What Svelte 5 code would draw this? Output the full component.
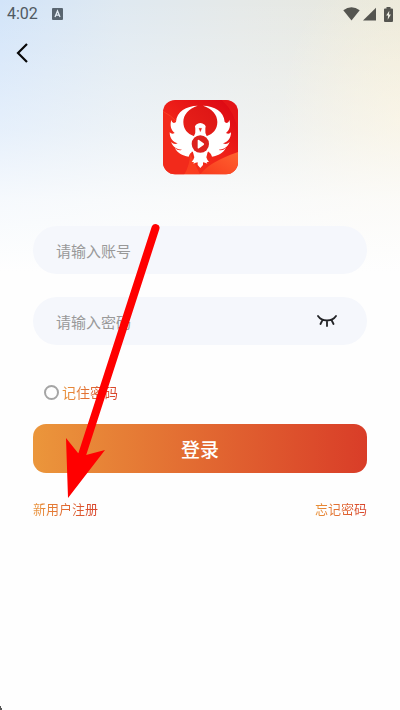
<script>
  let account = $state('');
  let password = $state('');
  let remember = $state(false);
  let visible = $state(false);
</script>

<main class="screen">
  <header class="status">
    <time>4:02</time>
    <svg class="badge" width="11" height="12" viewBox="0 0 11 12" aria-hidden="true">
      <rect width="11" height="12" rx="1" fill="#596570" />
      <path d="M3 9 5.500 3 8 9M4 7.200h3" fill="none" stroke="#e5eef6" stroke-width="1.300" />
    </svg>
    <div class="signals" aria-hidden="true">
      <svg width="17" height="14" viewBox="0 0 17 14"><path d="M.3 3.200Q8.500-2.800 16.700 3.200L8.500 13.600Z" /></svg>
      <svg width="13" height="14" viewBox="0 0 13 14"><path d="M13 .8V13.600H0Z" /></svg>
      <svg class="battery" width="9" height="15" viewBox="0 0 9 15">
        <path d="M2.500 0h4v1.500H8a1 1 0 0 1 1 1V14a1 1 0 0 1-1 1H1a1 1 0 0 1-1-1V2.500a1 1 0 0 1 1-1h1.500Z" />
        <path d="M5.300 3.800 2.200 8.600h1.900L3.700 12.700 6.900 7.500H5Z" fill="#eeeee3" />
      </svg>
    </div>
  </header>

  <nav>
    <button class="back" type="button" aria-label="返回">
      <svg width="12" height="20" viewBox="0 0 12 20"><path d="M11 1 2 10l9 9" fill="none" stroke="#080808" stroke-width="2.200" /></svg>
    </button>
  </nav>

  <svg class="logo" viewBox="0 0 225 225" aria-hidden="true">
    <defs>
      <linearGradient id="red" x1="0" y1="1" x2=".8" y2="0">
        <stop stop-color="#f6391c" /><stop offset=".5" stop-color="#f12419" /><stop offset="1" stop-color="#dd0914" />
      </linearGradient>
      <linearGradient id="ribbon" x1="1" y1="0" x2="0" y2="1">
        <stop stop-color="#ff6330" /><stop offset="1" stop-color="#f83a1d" />
      </linearGradient>
      <linearGradient id="sun" x1="0" y1="1" x2="1" y2="0">
        <stop stop-color="#ea221a" /><stop offset="1" stop-color="#dc1515" />
      </linearGradient>
      <clipPath id="tile"><rect width="225" height="223" rx="36" /></clipPath>
    </defs>
    <g clip-path="url(#tile)">
      <rect width="225" height="225" fill="url(#red)" />
      <path d="M0 32Q86 85 80 168Q78 197 63 225H0Z" fill="#f22a1b" />
      <path d="M80 158Q83 193 63 225H112Z" fill="#ff4825" opacity=".6" />
      <path d="M0 34Q48 58 67 108" fill="none" stroke="#ff5a37" stroke-width="2" opacity=".7" />
      <path d="M176 0Q218 38 225 98V0Z" fill="#e91d19" opacity=".6" />
      <path d="M112 223Q137 187 225 156V225Z" fill="url(#ribbon)" />
      <circle cx="112" cy="69" r="51" fill="url(#sun)" />
      <g fill="#fff">
        <path id="wing" d="M104 17C70 18 41 34 39 66Q28 74 25 60C20 77 24 90 35 99Q26 104 20 97C20 116 31 127 44 130Q34 136 24 126C31 144 45 148 57 149Q46 154 35 143C43 159 57 166 77 170Q81 156 90 155L112 165V107L92 108C74 102 61 88 61 66C61 44 77 25 104 17Z" />
        <use href="#wing" transform="matrix(-1 0 0 1 224 0)" />
        <path d="M92 110Q99 99 97 86Q94 77 99 74Q112 64 125 74Q130 77 127 86Q125 99 132 110V144H92Z" />
        <path d="M89 153L94 172Q92 180 86 185L93 187 91 191 98 188 104 187V195L112 204 120 195V187L126 188 133 191 131 187 138 185Q132 180 130 172L135 153Z" />
      </g>
      <path d="M108 85h8l-4 10ZM87 154Q91 162 88 169M137 154Q133 162 136 169" fill="#e82019" stroke="#ed281c" stroke-width="1" />
      <circle cx="112" cy="132" r="26" fill="#dc211d" />
      <path d="M104 121v23q1 3 4 1l14-10q3-3 0-5l-14-10q-3-2-4 1Z" fill="#fff" />
    </g>
  </svg>

  <form onsubmit={(event) => event.preventDefault()}>
    <div class="field">
      <input type="text" aria-label="账号" placeholder="请输入账号" autocomplete="username" bind:value={account} />
    </div>
    <div class="field">
      <input type={visible ? 'text' : 'password'} aria-label="密码" placeholder="请输入密码" autocomplete="current-password" bind:value={password} />
      <button class="eye" type="button" aria-label="显示密码" aria-pressed={visible} onclick={() => (visible = !visible)}>
        <svg width="20" height="12" viewBox="0 0 20 12"><path d="M1 1Q4 5.500 10 5.500T19 1M5.500 5 3.500 9M10 6v5M14.500 5l2 4" fill="none" stroke="#222326" stroke-width="1.800" stroke-linecap="round" /></svg>
      </button>
    </div>
    <label class="remember">
      <input type="checkbox" bind:checked={remember} />
      <span class="tint">记住密码</span>
    </label>
    <button class="login" type="submit">登录</button>
    <div class="links">
      <a class="tint" href="#register">新用户注册</a>
      <a class="tint" href="#forgot">忘记密码</a>
    </div>
  </form>

  <svg class="pointer" width="96" height="275" viewBox="0 0 96 275" aria-hidden="true">
    <path d="M91.500 5 18 232" fill="none" stroke="#f00" stroke-width="8" stroke-linecap="round" />
    <path d="M2 215 14 230 22 232 41 227 4 275Z" fill="#f00" />
  </svg>
  <svg class="mark" width="2" height="4" viewBox="0 0 2 4" aria-hidden="true"><path d="M0 0h1v2h1v2H0Z" fill="#555" /></svg>
</main>

<style>
  :global(body) { margin: 0; background: #fefefe; }
  .screen {
    position: relative;
    box-sizing: border-box;
    min-height: 100vh;
    overflow: hidden;
    font-family: "Noto Sans CJK SC", sans-serif;
    background:
      linear-gradient(to bottom, transparent 0, rgb(254 254 254 / 45%) 130px, rgb(254 254 254 / 82%) 200px, #fefefe 272px),
      radial-gradient(120px 170px at 100% 120px, rgb(255 243 212 / 55%), transparent),
      linear-gradient(to right, #d2e4f9 0%, #dfe9f1 30%, #e5e9e8 60%, #e9e8dc 100%);
  }
  button, input { font: inherit; margin: 0; border: 0; padding: 0; background: none; }
  button { cursor: pointer; }
  svg { display: block; }
  .status { display: flex; align-items: center; height: 28px; padding: 0 7px; }
  time { font: 16px/28px Roboto, sans-serif; color: #505961; }
  .badge { margin-left: 14px; }
  .signals { display: flex; align-items: center; gap: 3px; margin-left: auto; fill: #555550; }
  .battery { margin-left: 5px; }
  nav { display: flex; height: 72px; padding: 5px 6px; box-sizing: border-box; }
  .back { display: grid; place-items: center; width: 32px; height: 40px; }
  .logo { width: 75px; height: 75px; margin: 0 auto; }
  form { padding: 51px 33px 0; }
  .field { display: flex; align-items: center; height: 48px; margin-bottom: 23px; padding: 0 24px 0 23px; border-radius: 24px; background: #f5f7fc; }
  .field input { flex: 1; min-width: 0; height: 48px; font-size: 15px; color: #333; outline: 0; }
  .field input::placeholder { color: #999; opacity: 1; }
  .eye { display: grid; place-items: center; width: 32px; height: 32px; }
  .remember { display: flex; align-items: center; gap: 3px; width: max-content; height: 24px; margin: 35px 0 20px 11px; font-size: 14px; }
  .remember input { appearance: none; box-sizing: border-box; width: 15px; height: 15px; border: 2px solid #a5a5a5; border-radius: 50%; }
  .remember input:checked { background: #e67a34; }
  .tint { color: transparent; background: linear-gradient(to right, #e99339, #d8422b); background-clip: text; text-decoration: none; }
  .login { display: block; width: 100%; height: 49px; border-radius: 13px; background: linear-gradient(to right, #eb963b, #d93d28); color: #fff; font-size: 19px; font-weight: 500; }
  .links { display: flex; justify-content: space-between; margin-top: 26px; font-size: 13px; line-height: 20px; }
  .pointer { position: absolute; left: 64px; top: 223px; pointer-events: none; }
  .mark { position: absolute; left: 0; bottom: 0; }
</style>
